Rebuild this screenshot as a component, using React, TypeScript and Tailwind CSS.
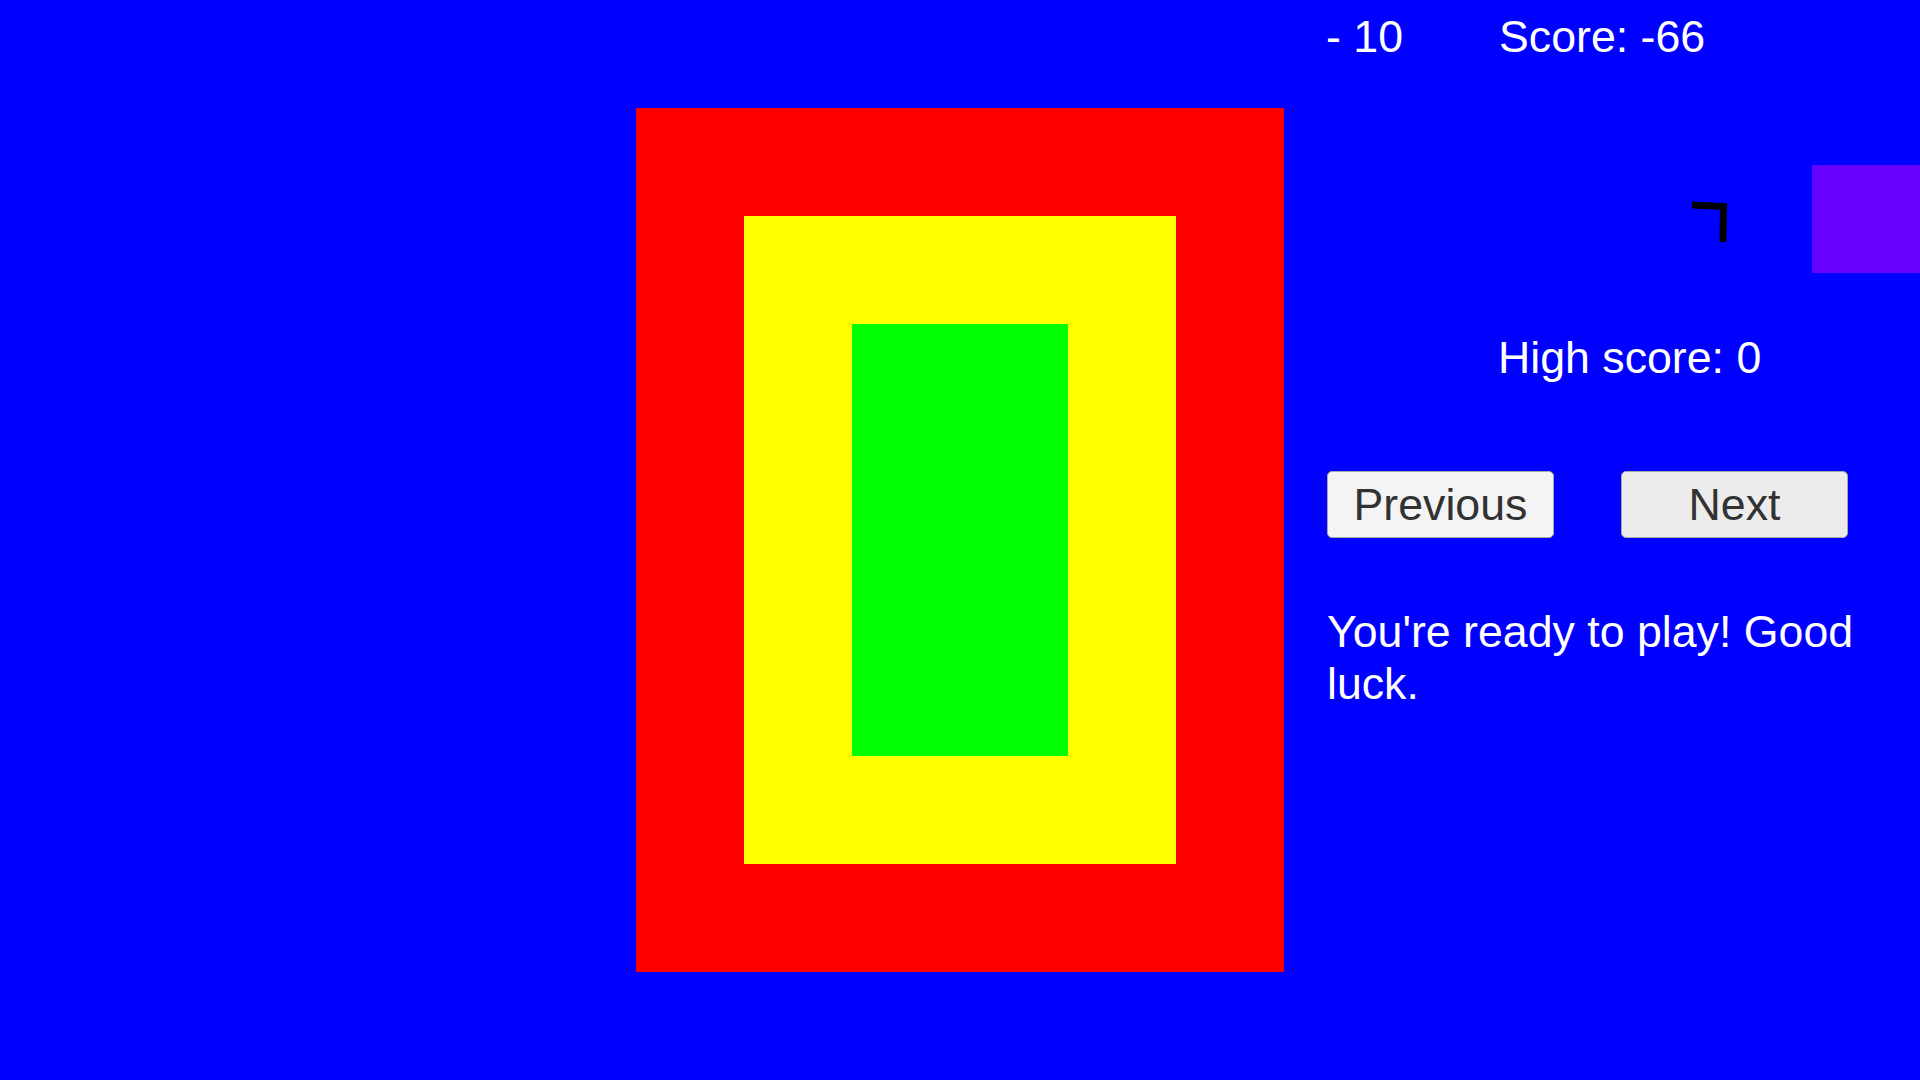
import React from "react";

export default function App() {
  return (
    <div
      className="flex w-[1920px] h-[1080px] overflow-hidden bg-[#0000ff] text-white"
      style={{ fontFamily: '"Liberation Sans", Arial, sans-serif' }}
    >
      {/* Game board */}
      <div className="ml-[636px] mt-[108px] w-[648px] h-[864px] shrink-0 bg-[#ff0000] p-[108px]">
        <div className="w-[432px] h-[648px] bg-[#ffff00] p-[108px]">
          <div className="w-[216px] h-[432px] bg-[#00ff00]" />
        </div>
      </div>

      {/* Right panel */}
      <div className="flex flex-col w-[636px] shrink-0">
        <div className="flex h-[165px] pt-[15px] text-[44.7px] leading-none">
          <div className="ml-[42px] w-[173px]">- 10</div>
          <div>Score: -66</div>
        </div>

        <div className="flex h-[108px]">
          <svg
            className="ml-[404px] mt-[33px]"
            width="44"
            height="48"
            viewBox="0 0 44 48"
          >
            <path
              d="M4 7 L35.5 8.5 L35 44"
              fill="none"
              stroke="#000000"
              strokeWidth="7"
              strokeLinejoin="miter"
              strokeLinecap="butt"
            />
          </svg>
          <div className="ml-auto w-[108px] h-[108px] bg-[#6600ff]" />
        </div>

        <div className="mt-[63px] ml-[214px] text-[44.7px] leading-none">High score: 0</div>

        <div className="mt-[90px] ml-[43px] flex gap-[67px]">
          <button className="flex items-center justify-center w-[227px] h-[67px] pt-[2px] rounded-[5px] border border-[#a8a8a8] bg-[#f4f4f4] text-[44.7px] leading-none text-[#323232]">
            Previous
          </button>
          <button className="flex items-center justify-center w-[227px] h-[67px] pt-[2px] rounded-[5px] border border-[#a8a8a8] bg-[#ececec] text-[44.7px] leading-none text-[#323232]">
            Next
          </button>
        </div>

        <div className="mt-[68px] ml-[43px] w-[560px] text-[44.7px] leading-[52px]">
          You're ready to play! Good luck.
        </div>
      </div>
    </div>
  );
}
